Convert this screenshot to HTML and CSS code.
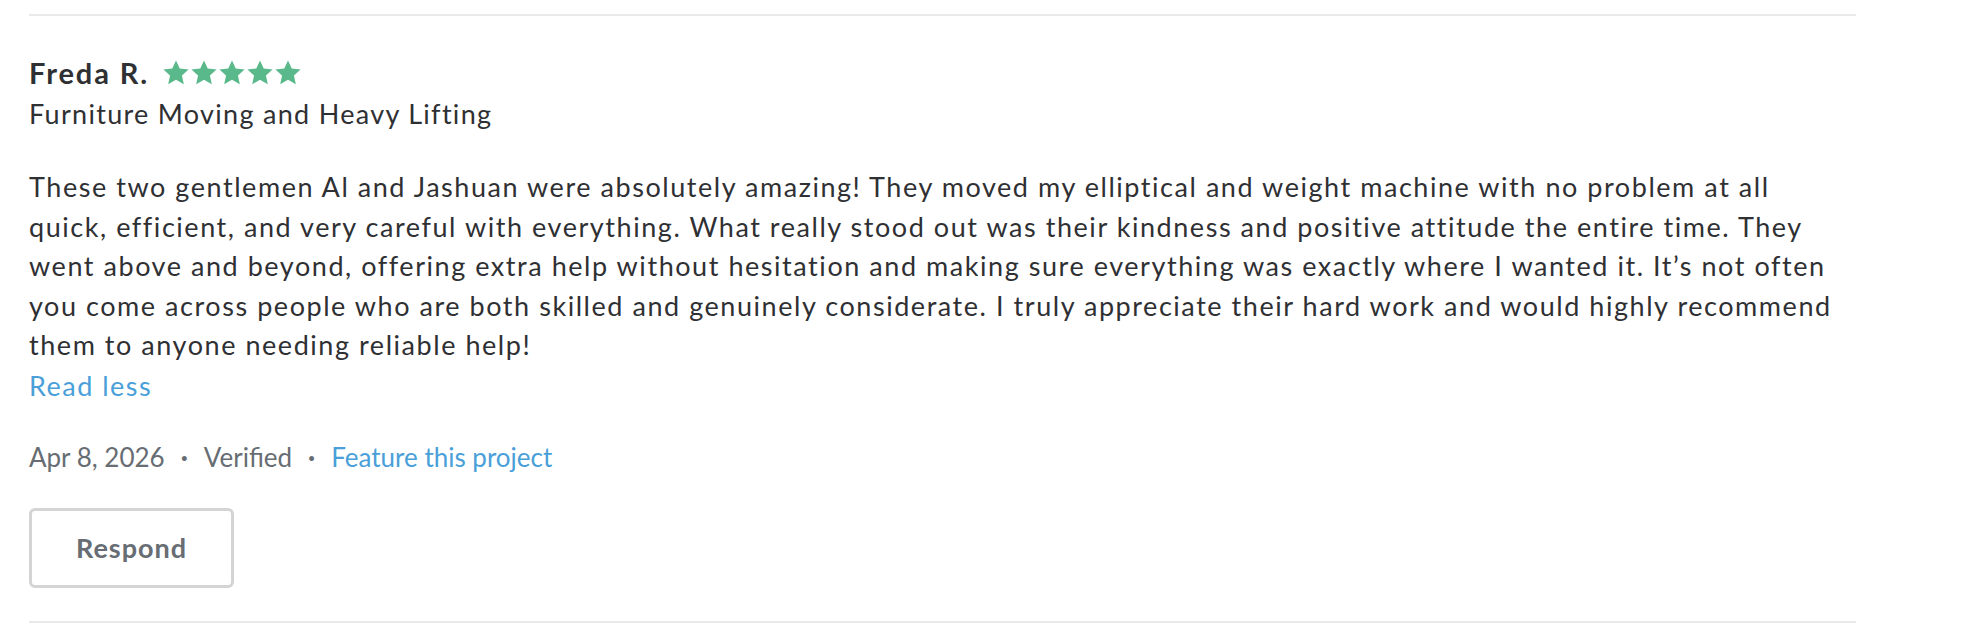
FILE: index.html
```html
<!DOCTYPE html>
<html lang="en">
<head>
<meta charset="utf-8">
<title>Review</title>
<link rel="stylesheet" href="styles.css">
</head>
<body>
<div class="review-list">
  <article class="review">
    <header class="review-head">
      <h3 class="reviewer">Freda R.</h3>
      <div class="stars" aria-label="5 stars">
        <svg class="star" viewBox="0 0 24 24"><path d="M12 1.2l3.2 7 7.6.8-5.7 5.1 1.6 7.5L12 17.8l-6.7 3.8 1.6-7.5L1.2 9l7.6-.8z"/></svg>
        <svg class="star" viewBox="0 0 24 24"><path d="M12 1.2l3.2 7 7.6.8-5.7 5.1 1.6 7.5L12 17.8l-6.7 3.8 1.6-7.5L1.2 9l7.6-.8z"/></svg>
        <svg class="star" viewBox="0 0 24 24"><path d="M12 1.2l3.2 7 7.6.8-5.7 5.1 1.6 7.5L12 17.8l-6.7 3.8 1.6-7.5L1.2 9l7.6-.8z"/></svg>
        <svg class="star" viewBox="0 0 24 24"><path d="M12 1.2l3.2 7 7.6.8-5.7 5.1 1.6 7.5L12 17.8l-6.7 3.8 1.6-7.5L1.2 9l7.6-.8z"/></svg>
        <svg class="star" viewBox="0 0 24 24"><path d="M12 1.2l3.2 7 7.6.8-5.7 5.1 1.6 7.5L12 17.8l-6.7 3.8 1.6-7.5L1.2 9l7.6-.8z"/></svg>
      </div>
    </header>
    <div class="service">Furniture Moving and Heavy Lifting</div>
    <p class="review-text">These two gentlemen Al and Jashuan were absolutely amazing! They moved my elliptical and weight machine with no problem at all<br>quick, efficient, and very careful with everything. What really stood out was their kindness and positive attitude the entire time. They<br>went above and beyond, offering extra help without hesitation and making sure everything was exactly where I wanted it. It’s not often<br>you come across people who are both skilled and genuinely considerate. I truly appreciate their hard work and would highly recommend<br>them to anyone needing reliable help!</p>
    <a class="read-less" href="#">Read less</a>
    <div class="meta">
      <span>Apr 8, 2026</span>
      <span class="dot">·</span>
      <span>Verified</span>
      <span class="dot">·</span>
      <a class="feature" href="#">Feature this project</a>
    </div>
    <button class="respond" type="button">Respond</button>
  </article>
</div>
</body>
</html>
```

FILE: styles.css
```css
html, body {
  margin: 0;
  padding: 0;
  background: #ffffff;
}

body {
  font-family: "Lato", "Open Sans", sans-serif;
  color: #2f3033;
}

.review-list {
  padding: 14px 0 0 29px;
  width: 1827px;
}

.review {
  display: flex;
  flex-direction: column;
  align-items: flex-start;
  border-top: 2px solid #e9e9e9;
  border-bottom: 2px solid #e9e9e9;
  padding: 39px 0 33px;
}

.review-head {
  display: flex;
  align-items: center;
  gap: 13px;
}

.reviewer {
  margin: 0;
  font-size: 29px;
  font-weight: 700;
  line-height: 36px;
  letter-spacing: 1.9px;
  color: #2f3033;
}

.stars {
  display: flex;
}

.star {
  width: 28px;
  height: 28px;
  fill: #5ab98b;
}

.service {
  margin-top: 5px;
  font-size: 27px;
  line-height: 36px;
  letter-spacing: 1.3px;
  color: #2f3033;
}

.review-text {
  margin: 35px 0 0;
  font-size: 27px;
  line-height: 39.6px;
  letter-spacing: 1.55px;
  color: #2f3033;
}

.read-less {
  margin-top: 3px;
  font-size: 27px;
  line-height: 36px;
  letter-spacing: 1.5px;
  color: #4a9fd9;
  text-decoration: none;
}

.meta {
  margin-top: 37px;
  display: flex;
  align-items: center;
  gap: 16px;
  font-size: 26px;
  line-height: 32px;
  color: #676d73;
}

.meta .dot {
  font-weight: 700;
}

.meta .feature {
  color: #4a9fd9;
  text-decoration: none;
}

.respond {
  margin-top: 35px;
  width: 205px;
  height: 80px;
  border: 3px solid #d4d4d4;
  border-radius: 6px;
  background: #ffffff;
  font-family: "Lato", "Open Sans", sans-serif;
  font-size: 27px;
  font-weight: 700;
  letter-spacing: 1px;
  color: #676d73;
  cursor: pointer;
}
```
